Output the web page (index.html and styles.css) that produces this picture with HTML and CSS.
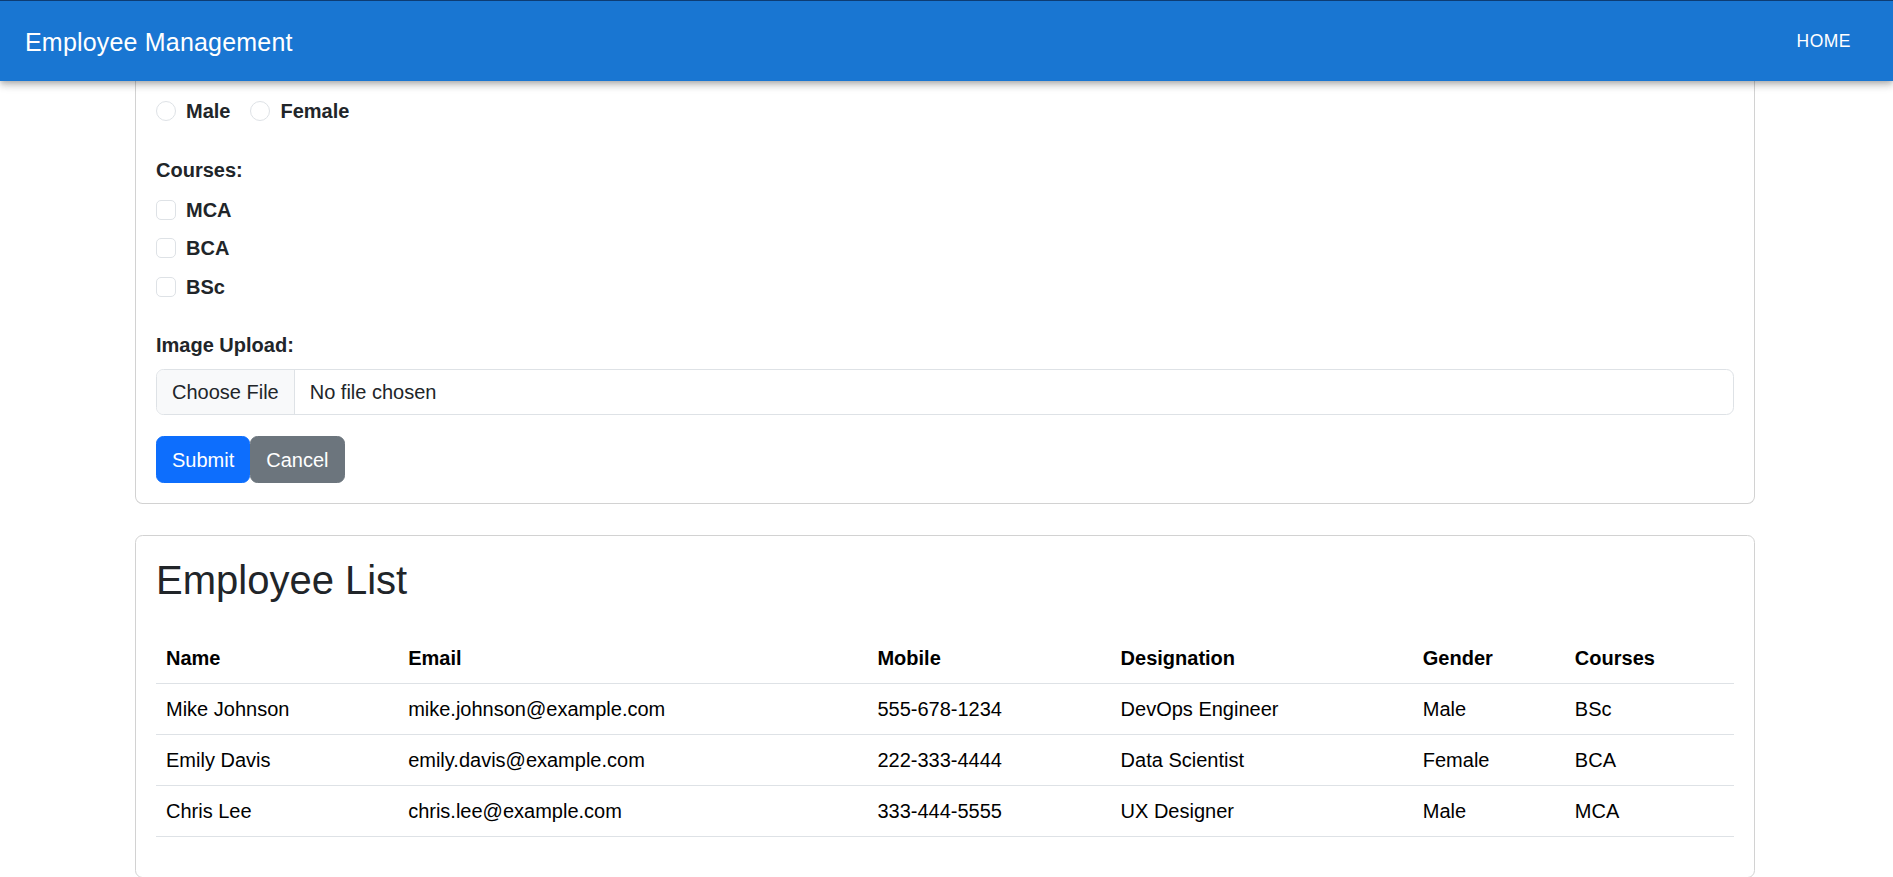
FILE: index.html
```html
<!DOCTYPE html>
<html lang="en">
<head>
<meta charset="utf-8">
<title>Employee Management</title>
<link rel="stylesheet" href="styles.css">
</head>
<body>
<header class="appbar">
  <div class="toolbar">
    <h6 class="brand">Employee Management</h6>
    <button class="nav-btn" type="button">Home</button>
  </div>
</header>

<main class="container">
  <form class="card card-form">
    <div class="card-body">
      <div class="radio-row">
        <label class="choice inline"><input type="radio" name="gender"><span>Male</span></label>
        <label class="choice inline"><input type="radio" name="gender"><span>Female</span></label>
      </div>

      <div class="group">
        <div class="form-label">Courses:</div>
        <div class="check-list">
          <label class="choice"><input type="checkbox"><span>MCA</span></label>
          <label class="choice"><input type="checkbox"><span>BCA</span></label>
          <label class="choice"><input type="checkbox"><span>BSc</span></label>
        </div>
      </div>

      <div class="group upload-group">
        <div class="form-label upload-label">Image Upload:</div>
        <div class="file-input">
          <span class="file-btn">Choose File</span>
          <span class="file-name">No file chosen</span>
        </div>
      </div>

      <div class="actions">
        <button class="btn btn-primary" type="button">Submit</button>
        <button class="btn btn-secondary" type="button">Cancel</button>
      </div>
    </div>
  </form>

  <section class="card card-list">
    <div class="card-body">
      <h2 class="list-title">Employee List</h2>
      <table class="table">
        <colgroup>
          <col class="c-name">
          <col class="c-email">
          <col class="c-mobile">
          <col class="c-desig">
          <col class="c-gender">
          <col class="c-courses">
        </colgroup>
        <thead>
          <tr>
            <th>Name</th>
            <th>Email</th>
            <th>Mobile</th>
            <th>Designation</th>
            <th>Gender</th>
            <th>Courses</th>
          </tr>
        </thead>
        <tbody>
          <tr>
            <td>Mike Johnson</td>
            <td>mike.johnson@example.com</td>
            <td>555-678-1234</td>
            <td>DevOps Engineer</td>
            <td>Male</td>
            <td>BSc</td>
          </tr>
          <tr>
            <td>Emily Davis</td>
            <td>emily.davis@example.com</td>
            <td>222-333-4444</td>
            <td>Data Scientist</td>
            <td>Female</td>
            <td>BCA</td>
          </tr>
          <tr>
            <td>Chris Lee</td>
            <td>chris.lee@example.com</td>
            <td>333-444-5555</td>
            <td>UX Designer</td>
            <td>Male</td>
            <td>MCA</td>
          </tr>
        </tbody>
      </table>
    </div>
  </section>
</main>
</body>
</html>
```

FILE: styles.css
```css
* {
  box-sizing: border-box;
}

html {
  overflow: hidden;
}

body {
  margin: 0;
  font-family: "Liberation Sans", Arial, sans-serif;
  font-size: 20px;
  line-height: 1.5;
  color: #212529;
  background: #fff;
}

/* ---------- App bar ---------- */
.appbar {
  position: relative;
  z-index: 10;
  background: #1976d2;
  color: #fff;
  border-top: 1px solid #0d3c73;
  box-shadow: 0 2.5px 5px -1.25px rgba(0, 0, 0, 0.2),
              0 5px 6.25px 0 rgba(0, 0, 0, 0.14),
              0 1.25px 12.5px 0 rgba(0, 0, 0, 0.12);
}

.toolbar {
  display: flex;
  align-items: center;
  justify-content: space-between;
  height: 80px;
  padding: 0 32px 0 25px;
}

.brand {
  margin: 0;
  padding-top: 2px;
  font-size: 25px;
  font-weight: 500;
  line-height: 1.6;
  letter-spacing: 0.0075em;
}

.nav-btn {
  font-family: inherit;
  font-size: 17.5px;
  font-weight: 500;
  letter-spacing: 0.5px;
  line-height: 1.75;
  text-transform: uppercase;
  color: #fff;
  background: none;
  border: 0;
  padding: 7.5px 10px;
}

/* ---------- Layout ---------- */
.container {
  width: 1623px;
  padding-right: 3px;
  margin: 0 auto;
}

.card {
  background: #fff;
  border: 1px solid #d2d2d2;
  border-radius: 7.5px;
}

.card-form {
  border-top: 0;
  border-top-left-radius: 0;
  border-top-right-radius: 0;
}

.card-form .card-body {
  padding: 15px 20px 20px;
}

.card-list {
  margin-top: 31px;
}

.card-list .card-body {
  padding: 20px;
}

/* ---------- Form ---------- */
.radio-row {
  display: flex;
  height: 30px;
  margin-bottom: 28.5px;
}

.choice {
  display: flex;
  align-items: center;
  gap: 10px;
  height: 30px;
  font-weight: 700;
  line-height: 30px;
}

.choice.inline {
  margin-right: 20px;
}

.choice input {
  appearance: none;
  -webkit-appearance: none;
  flex: none;
  width: 20px;
  height: 20px;
  margin: 0;
  background: #fff;
  border: 1px solid #dee2e6;
}

.choice input[type="radio"] {
  border-radius: 50%;
}

.choice input[type="checkbox"] {
  border-radius: 5px;
}

.form-label {
  font-weight: 700;
  line-height: 30px;
  margin-bottom: 10px;
}

.upload-label {
  margin-bottom: 9.5px;
}

.check-list {
  display: flex;
  flex-direction: column;
  gap: 8.5px;
}

.group {
  margin-bottom: 28px;
}

.upload-group {
  margin-bottom: 21px;
}

.file-input {
  display: flex;
  height: 46px;
  border: 1px solid #dee2e6;
  border-radius: 7.5px;
  overflow: hidden;
}

.file-btn {
  display: flex;
  align-items: center;
  padding: 0 15px;
  background: #f8f9fa;
  border-right: 1px solid #dee2e6;
}

.file-name {
  display: flex;
  align-items: center;
  padding-left: 15px;
}

.actions {
  display: flex;
}

.btn {
  font-family: inherit;
  font-size: 20px;
  line-height: 30px;
  color: #fff;
  padding: 7.5px 15px;
  border: 1px solid transparent;
  border-radius: 7.5px;
}

.btn-primary {
  background: #0d6efd;
  border-color: #0d6efd;
}

.btn-secondary {
  background: #6c757d;
  border-color: #6c757d;
}

/* ---------- Table ---------- */
.list-title {
  margin: 0 0 28.5px;
  font-size: 40px;
  font-weight: 500;
  line-height: 1.2;
}

.table {
  width: 100%;
  table-layout: fixed;
  border-collapse: collapse;
  color: #000;
  margin-bottom: 20px;
}

.table th,
.table td {
  padding: 10px;
  text-align: left;
  line-height: 30px;
  border-bottom: 1px solid #dee2e6;
}

.table th {
  font-weight: 700;
}

.c-name { width: 242px; }
.c-email { width: 469px; }
.c-mobile { width: 243px; }
.c-desig { width: 302px; }
.c-gender { width: 152px; }
.c-courses { width: 169px; }
```
